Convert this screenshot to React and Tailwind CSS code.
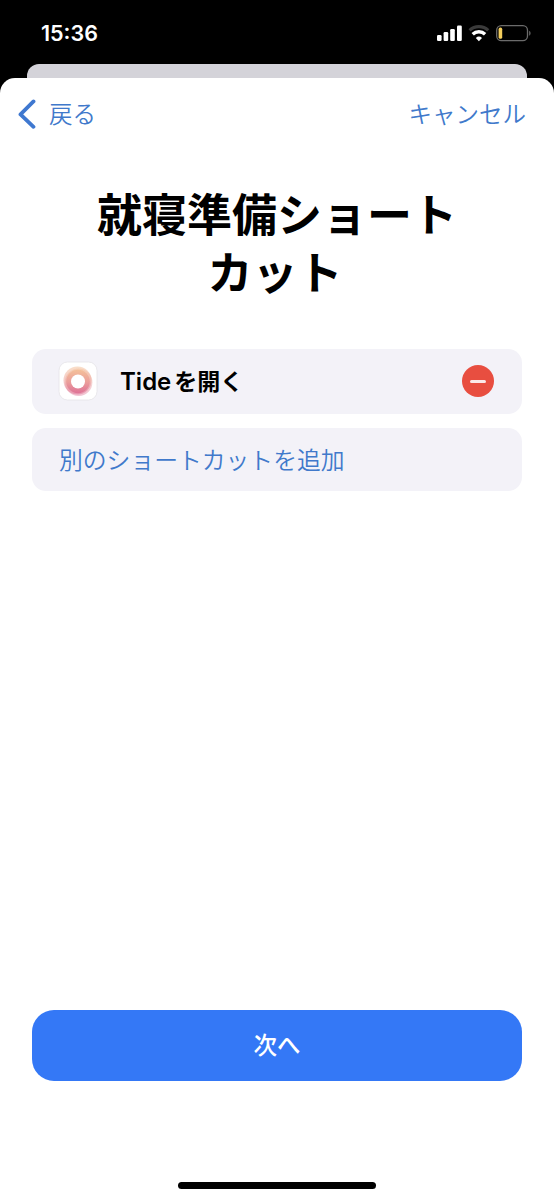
import React from 'react';

const StatusIcons = () => (
  <svg width="96" height="20" viewBox="0 0 96 20" fill="none">
    {/* signal */}
    <g fill="#fff">
      <rect x="1" y="12" width="4.6" height="6" rx="1.2" />
      <rect x="7.6" y="9" width="4.6" height="9" rx="1.2" />
      <rect x="14.2" y="6" width="4.6" height="12" rx="1.2" />
      <rect x="21" y="2.5" width="4.8" height="15.5" rx="1.2" />
    </g>
    {/* wifi */}
    <path d="M33.6 7.4a13.4 13.4 0 0 1 18.6 0" stroke="#3a3a3a" strokeWidth="3.2" />
    <path d="M36.7 11.2a9 9 0 0 1 12.4 0" stroke="#fff" strokeWidth="3.4" />
    <path d="M39.8 14.9a4.6 4.6 0 0 1 6.2 0L42.9 18.2z" fill="#fff" />
    {/* battery */}
    <rect x="60.7" y="2.7" width="30.8" height="15" rx="4.6" stroke="#6b6b6b" strokeWidth="1.3" />
    <rect x="62.6" y="4.6" width="3.6" height="11.2" rx="1.6" fill="#f3cd5c" />
    <path d="M93.2 7.8c1.8.7 1.8 4.3 0 5z" fill="#6b6b6b" />
  </svg>
);

const TideIcon = () => (
  <svg width="40" height="40" viewBox="0 0 40 40" className="shrink-0">
    <defs>
      <linearGradient id="tide" x1="0" y1="0" x2="0" y2="1">
        <stop offset="0" stopColor="#f3bd92" />
        <stop offset="0.5" stopColor="#ea9a94" />
        <stop offset="1" stopColor="#dc6890" />
      </linearGradient>
    </defs>
    <rect x="1" y="1" width="38" height="38" rx="8.5" fill="#fff" stroke="#e4e3e7" strokeWidth="0.8" />
    <g fill="url(#tide)">
      <circle cx="19.5" cy="19.5" r="14" opacity="0.5" />
      <circle cx="20.6" cy="21.3" r="13.8" opacity="0.4" />
      <circle cx="20" cy="20.5" r="11.8" opacity="0.8" />
    </g>
    <circle cx="20" cy="20.5" r="7" fill="#fff" />
  </svg>
);

const StatusBar = () => (
  <div className="flex h-16 items-start justify-between pl-[41px] pr-[22px] pt-[23px]">
    <span className="-mt-px font-['Inter','Liberation_Sans',sans-serif] text-[21.5px] font-semibold leading-[22px] text-white">
      15:36
    </span>
    <StatusIcons />
  </div>
);

const NavBar = () => (
  <div className="flex h-[72px] items-center justify-between pl-[18px] pr-7 text-[23.5px] leading-none text-[#4079cb]">
    <button className="flex items-center gap-[13px]">
      <svg width="18" height="30" viewBox="0 0 18 30" fill="none">
        <path d="M15.5 2.4L2.5 15.4l13 12.4" stroke="#3f78d0" strokeWidth="3.8" strokeLinecap="round" strokeLinejoin="round" />
      </svg>
      <span className="font-[350]">戻る</span>
    </button>
    <button className="font-[350]">キャンセル</button>
  </div>
);

const ShortcutRow = () => (
  <div className="flex h-[65px] items-center rounded-[14px] bg-[#f3f2f8] pb-px pl-[26px] pr-7">
    <TideIcon />
    <div className="ml-[22px] flex flex-1 items-center gap-[3px] text-[23px] font-bold leading-none text-black">
      <span className="mt-px font-['Inter','Liberation_Sans',sans-serif] text-[24px] font-semibold">Tide</span>
      <span className="-mt-px">を開く</span>
    </div>
    <button className="flex size-8 items-center justify-center rounded-full bg-[#e84e40]">
      <span className="h-[3px] w-4 rounded-full bg-[#fbe9e8]" />
    </button>
  </div>
);

const App = () => {
  return (
    <div className="flex h-[1200px] w-[554px] flex-col overflow-hidden bg-black font-['Noto_Sans_CJK_JP',sans-serif]">
      <StatusBar />
      {/* previous sheet showing behind */}
      <div className="mx-[27px] h-[14px] shrink-0 rounded-t-[12px] bg-[#d4d3d9]" />
      <div className="flex flex-1 flex-col rounded-t-[15px] bg-white">
        <NavBar />
        <h1 className="mt-[34px] text-center text-[45px] font-bold leading-[58px] text-black">
          <span className="block">就寝準備ショート</span>
          <span className="block pr-1">カット</span>
        </h1>
        <div className="mx-8 mt-[49px] flex flex-col gap-[14px]">
          <ShortcutRow />
          <button className="flex h-[63px] items-center rounded-[14px] bg-[#f3f2f8] pb-px pl-[27px] text-[23.8px] font-[350] leading-none text-[#4079cb]">
            別のショートカットを追加
          </button>
        </div>
        <button className="mx-8 mt-auto h-[71px] rounded-[22px] bg-[#3478f6] pb-0.5 text-[23.5px] font-medium leading-none text-white">
          次へ
        </button>
        <div className="mx-auto mb-[11px] mt-[101px] h-[7px] w-[198px] rounded-full bg-black" />
      </div>
    </div>
  );
};

export default App;
